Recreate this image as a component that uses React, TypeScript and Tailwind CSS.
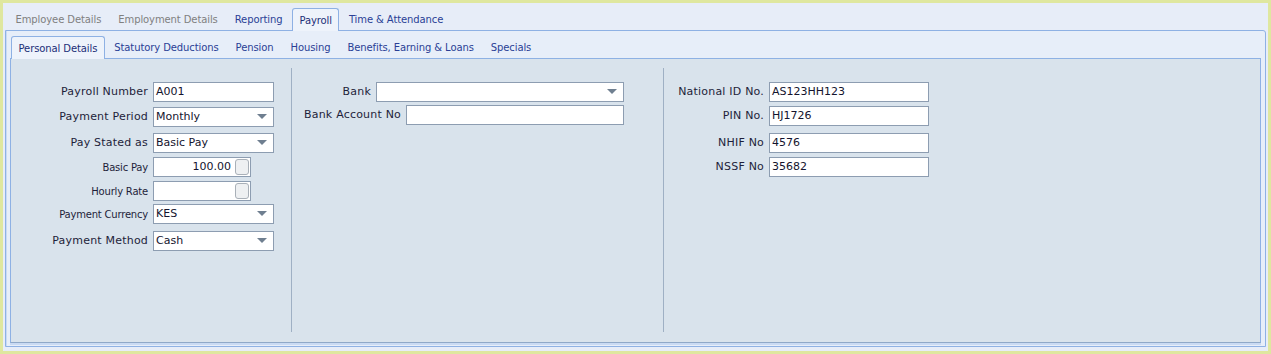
import type { ReactNode } from 'react';

const font = { fontFamily: '"DejaVu Sans", Verdana, sans-serif' };

const topTabs = [
  { label: 'Employee Details', disabled: true },
  { label: 'Employment Details', disabled: true },
  { label: 'Reporting' },
  { label: 'Payroll', active: true },
  { label: 'Time & Attendance' },
];

const subTabs = ['Personal Details', 'Statutory Deductions', 'Pension', 'Housing', 'Benefits, Earning & Loans', 'Specials'];

function Tab({ label, active, disabled }: { label: string; active?: boolean; disabled?: boolean }) {
  if (active) {
    return (
      <div className="relative -mb-px mx-[1px] flex h-[23px] items-center rounded-t-[3px] border border-b-0 border-[#8eb1e4] bg-[#eef3fb] px-[6.5px] text-[10px] tracking-[-0.1px] text-[#1c2f78]">
        {label}
      </div>
    );
  }
  return (
    <div className={`flex h-[22px] items-center px-[8.5px] text-[10px] tracking-[-0.1px] ${disabled ? 'text-[#808080]' : 'text-[#2a3f96]'}`}>
      {label}
    </div>
  );
}

function Arrow() {
  return (
    <svg width="10" height="6" viewBox="0 0 10 6" className="shrink-0">
      <path d="M0 0 L10 0 L5 5 Z" fill="#6f7f90" />
    </svg>
  );
}

function Field({ value, width, select, spin, right }: { value?: string; width: number; select?: boolean; spin?: boolean; right?: boolean }) {
  return (
    <div
      className="flex h-[20px] shrink-0 items-center border border-[#8d9db1] bg-white pl-[2px] pr-[6px] text-[11px] text-[#14142e]"
      style={{ width }}
    >
      <span className={`flex-1 ${right ? 'text-right' : ''}`}>{value}</span>
      {select ? <Arrow /> : null}
      {spin ? <span className="ml-[4px] -mr-[5px] h-[16px] w-[14px] rounded-[3px] border border-[#a9b0b8] bg-[#eef0f2]" /> : null}
    </div>
  );
}

function Row({ label, labelWidth, small, mt, children }: { label: string; labelWidth: number; small?: boolean; mt: number; children: ReactNode }) {
  return (
    <div className="flex items-center gap-[5px]" style={{ marginTop: mt }}>
      <span
        className={`shrink-0 text-right text-[#1e1e3a] ${small ? 'text-[10px] tracking-[-0.2px]' : 'text-[11px] tracking-[0.2px]'}`}
        style={{ width: labelWidth }}
      >
        {label}
      </span>
      {children}
    </div>
  );
}

export default function App() {
  return (
    <div className="flex h-[354px] w-[1271px] flex-col border-[3px] border-[#dfe79f] bg-[#e7edf8]" style={font}>
      <div className="ml-[4px] mt-[5px] flex items-end">
        {topTabs.map((tab) => (
          <Tab key={tab.label} {...tab} />
        ))}
      </div>

      <div className="mx-[2px] mb-[4px] flex flex-1 flex-col rounded-tr-[3px] border border-[#8eb1e4] bg-[#e7eef9] shadow-[inset_1px_0_0_#c9daf3]">
        <div className="ml-[4px] mt-[5px] flex items-end">
          {subTabs.map((label, i) => (
            <Tab key={label} label={label} active={i === 0} />
          ))}
        </div>

        <div className="mx-[4px] mb-[3px] flex flex-1 border border-[#8eb1e4] border-b-[#8fa8c8] bg-[#d9e3ec] pb-[10px] pt-[9px] shadow-[0_2px_0_#c9daf3]">
          <div className="flex w-[281px] flex-col border-r border-[#9fb0c4] pt-[14px]">
            <Row label="Payroll Number" labelWidth={137} mt={0}><Field value="A001" width={121} /></Row>
            <Row label="Payment Period" labelWidth={137} mt={5}><Field value="Monthly" width={121} select /></Row>
            <Row label="Pay Stated as" labelWidth={137} mt={6}><Field value="Basic Pay" width={121} select /></Row>
            <Row label="Basic Pay" labelWidth={137} small mt={4}><Field value="100.00" width={98} spin right /></Row>
            <Row label="Hourly Rate" labelWidth={137} small mt={4}><Field width={98} spin /></Row>
            <Row label="Payment Currency" labelWidth={137} small mt={3}><Field value="KES" width={121} select /></Row>
            <Row label="Payment Method" labelWidth={137} mt={7}><Field value="Cash" width={121} select /></Row>
          </div>

          <div className="flex w-[372px] flex-col border-r border-[#9fb0c4] pt-[14px]">
            <Row label="Bank" labelWidth={79} mt={0}><Field width={248} select /></Row>
            <Row label="Bank Account No" labelWidth={109} mt={3}><Field width={218} /></Row>
          </div>

          <div className="flex flex-col pt-[14px]">
            <Row label="National ID No." labelWidth={100} mt={0}><Field value="AS123HH123" width={160} /></Row>
            <Row label="PIN No." labelWidth={100} mt={4}><Field value="HJ1726" width={160} /></Row>
            <Row label="NHIF No" labelWidth={100} mt={7}><Field value="4576" width={160} /></Row>
            <Row label="NSSF No" labelWidth={100} mt={4}><Field value="35682" width={160} /></Row>
          </div>
        </div>
      </div>
    </div>
  );
}
